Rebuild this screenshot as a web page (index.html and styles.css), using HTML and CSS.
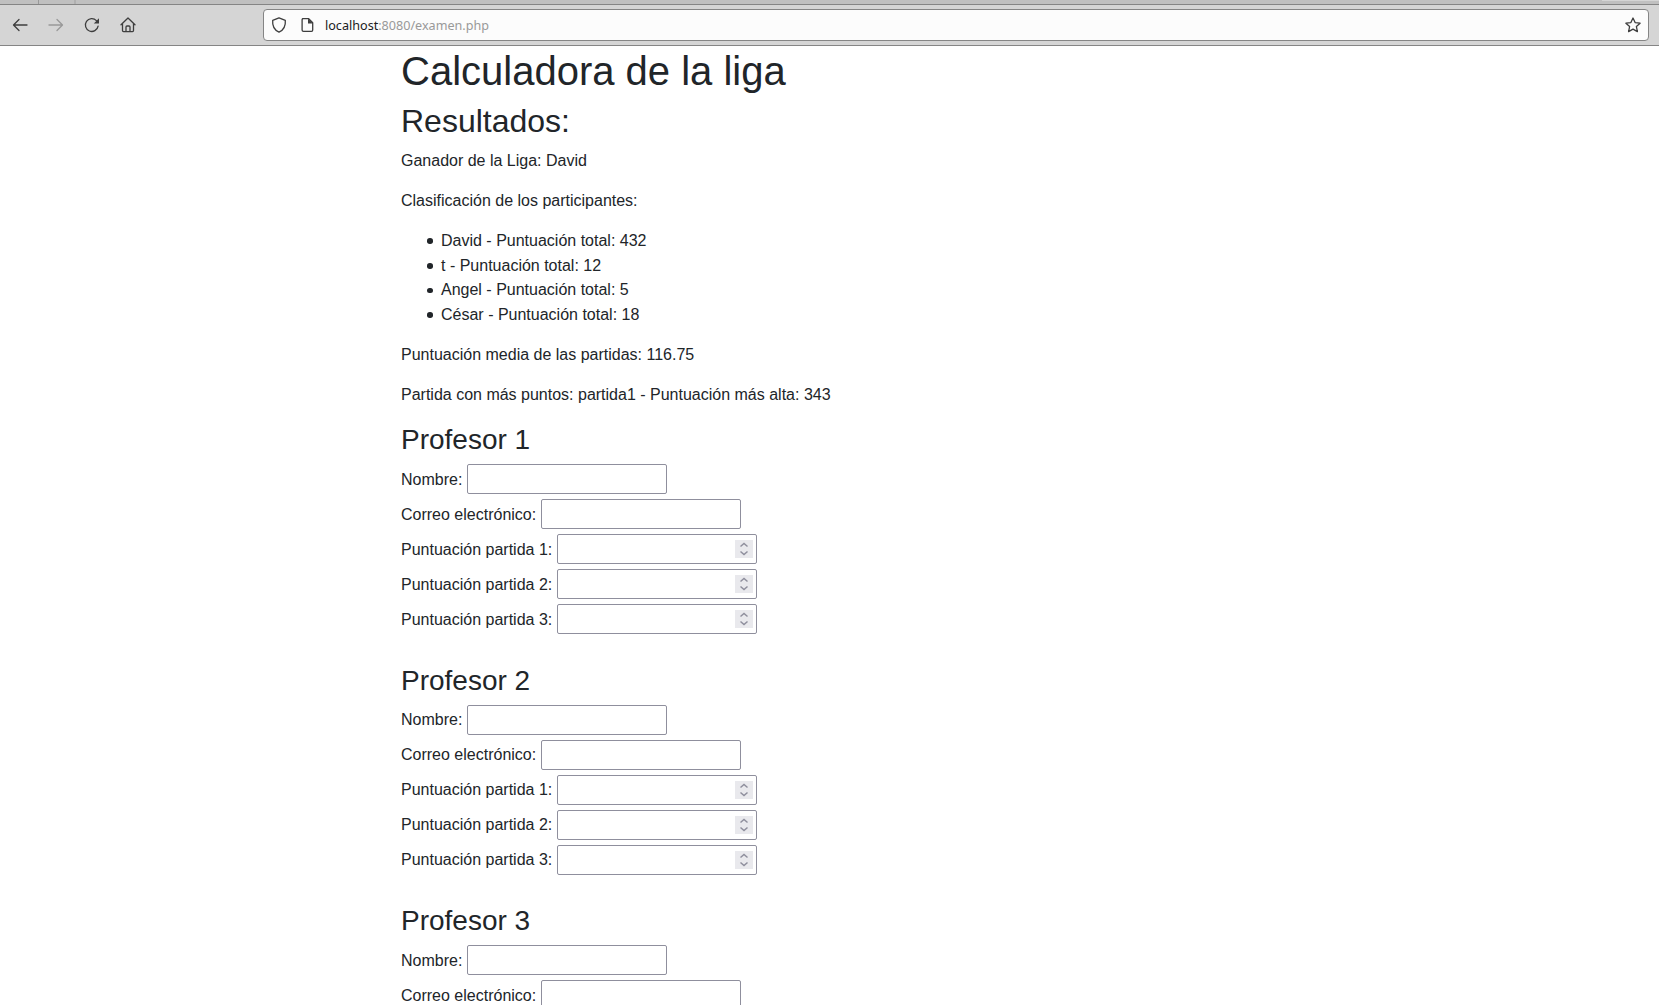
FILE: index.html
```html
<!DOCTYPE html>
<html lang="es">
<head>
<meta charset="utf-8">
<title>Calculadora de la liga</title>
<link rel="stylesheet" href="styles.css">
</head>
<body>
<header class="chrome">
  <div class="tabs"><span class="tab tab-first"></span><span class="tab tab-second"></span><span class="tab-end"></span></div>
  <nav class="toolbar">
    <svg class="icon" viewBox="0 0 16 16"><path d="M15 8H1.6M7 2.5L1.5 8L7 13.5"/></svg>
    <svg class="icon disabled" viewBox="0 0 16 16"><path d="M1 8h13.4M9 2.5L14.5 8L9 13.5"/></svg>
    <svg class="icon" viewBox="0 0 16 16"><path d="M14.1 9.2A6.4 6.4 0 1 1 12.4 3.6"/><path class="solid" d="M15 1.2v5.2H9.8z"/></svg>
    <svg class="icon home" viewBox="0 0 16 16"><path d="M1 7.8L8 1l7 6.8M2.5 6.8v6.8q0 1 1 1h9q1 0 1-1V6.8M6 14.5V10q0-1 1-1h2q1 0 1 1v4.5"/></svg>
    <div class="urlbar">
      <svg class="icon" viewBox="0 0 16 16"><path d="M8 .8L14.3 3.3C14.8 8.6 12.6 13.1 8 15.2C3.4 13.1 1.2 8.6 1.7 3.3Z"/></svg>
      <svg class="icon page" viewBox="0 0 16 16"><path d="M3.5 1.7h6.2l4 4v7.4q0 1.2-1.2 1.2h-8q-1.4 0-1.4-1.2V2.9q0-1.2 1.2-1.2z"/><path class="solid" d="M9 1.5v5h5z"/></svg>
      <span class="address"><span class="host">localhost</span>:8080/examen.php</span>
      <svg class="icon star" viewBox="0 0 16 16"><path d="M8 1l2.1 4.6 5 .6-3.7 3.4 1 5L8 12.1l-4.4 2.5 1-5L.9 6.2l5-.6z"/></svg>
    </div>
  </nav>
</header>
<main class="container">
  <h1>Calculadora de la liga</h1>
  <h2>Resultados:</h2>
  <p>Ganador de la Liga: David</p>
  <p>Clasificación de los participantes:</p>
  <ul>
    <li>David - Puntuación total: 432</li>
    <li>t - Puntuación total: 12</li>
    <li>Angel - Puntuación total: 5</li>
    <li>César - Puntuación total: 18</li>
  </ul>
  <p>Puntuación media de las partidas: 116.75</p>
  <p>Partida con más puntos: partida1 - Puntuación más alta: 343</p>
  <form>
    <section class="teacher">
      <h3>Profesor 1</h3>
      <label class="row"><span class="caption">Nombre:</span><span class="field"><input type="text"></span></label>
      <label class="row"><span class="caption">Correo electrónico:</span><span class="field"><input type="email"></span></label>
      <label class="row"><span class="caption">Puntuación partida 1:</span><span class="field"><input type="number"><svg class="spin" viewBox="0 0 18 18"><path d="M5.5 6.5L9 3.5l3.5 3M5.5 11.5L9 14.5l3.5-3"/></svg></span></label>
      <label class="row"><span class="caption">Puntuación partida 2:</span><span class="field"><input type="number"><svg class="spin" viewBox="0 0 18 18"><path d="M5.5 6.5L9 3.5l3.5 3M5.5 11.5L9 14.5l3.5-3"/></svg></span></label>
      <label class="row"><span class="caption">Puntuación partida 3:</span><span class="field"><input type="number"><svg class="spin" viewBox="0 0 18 18"><path d="M5.5 6.5L9 3.5l3.5 3M5.5 11.5L9 14.5l3.5-3"/></svg></span></label>
    </section>
    <section class="teacher">
      <h3>Profesor 2</h3>
      <label class="row"><span class="caption">Nombre:</span><span class="field"><input type="text"></span></label>
      <label class="row"><span class="caption">Correo electrónico:</span><span class="field"><input type="email"></span></label>
      <label class="row"><span class="caption">Puntuación partida 1:</span><span class="field"><input type="number"><svg class="spin" viewBox="0 0 18 18"><path d="M5.5 6.5L9 3.5l3.5 3M5.5 11.5L9 14.5l3.5-3"/></svg></span></label>
      <label class="row"><span class="caption">Puntuación partida 2:</span><span class="field"><input type="number"><svg class="spin" viewBox="0 0 18 18"><path d="M5.5 6.5L9 3.5l3.5 3M5.5 11.5L9 14.5l3.5-3"/></svg></span></label>
      <label class="row"><span class="caption">Puntuación partida 3:</span><span class="field"><input type="number"><svg class="spin" viewBox="0 0 18 18"><path d="M5.5 6.5L9 3.5l3.5 3M5.5 11.5L9 14.5l3.5-3"/></svg></span></label>
    </section>
    <section class="teacher">
      <h3>Profesor 3</h3>
      <label class="row"><span class="caption">Nombre:</span><span class="field"><input type="text"></span></label>
      <label class="row"><span class="caption">Correo electrónico:</span><span class="field"><input type="email"></span></label>
    </section>
  </form>
</main>
</body>
</html>
```
FILE: styles.css
```css
* { box-sizing: border-box; }
body {
  margin: 0;
  height: 100vh;
  overflow: hidden;
  background: #fff;
  color: #212529;
  font: 16px/24px "Liberation Sans", Arial, sans-serif;
}
.chrome { height: 46px; border-bottom: 1px solid #858585; background: #d5d5d5; }
.tabs { display: flex; height: 5px; background: #c0c0c0; border-bottom: 1px solid #858585; }
.tab-first { width: 39px; border-right: 1px solid #999; }
.tab-second { width: 37px; border-right: 2px solid #b0b0b0; }
.tab-end { margin-left: auto; width: 57px; height: 1px; background: #d5d5d5; }
.toolbar { display: flex; align-items: center; height: 40px; padding: 0 10px 0 12px; }
.icon { flex: none; width: 16px; height: 16px; margin-right: 20px; fill: none; stroke: #3e3e3e; stroke-width: 1.3; stroke-linejoin: round; stroke-linecap: round; }
.icon .solid { fill: #3e3e3e; stroke: none; }
.disabled { stroke: #999; }
.home { margin: 0 20.5px 0 -0.5px; }
.urlbar {
  display: flex;
  align-items: center;
  flex: 1;
  height: 32px;
  margin-left: 107px;
  padding: 0 7px;
  border: 1px solid #858585;
  border-radius: 4px;
  background: #fcfcfc;
}
.urlbar .icon { margin-right: 12px; }
.urlbar .page { margin-right: 10px; }
.urlbar .star { margin: 0 0 0 auto; }
.address { padding-top: 2px; color: #999; font: 12.6px/20px "Noto Sans", sans-serif; }
.host { color: #202020; }
.container { padding: 0.6px 0 0 401px; }
h1, h2, h3 { margin: 0; font-weight: 400; line-height: 1.2; }
h1 { margin-bottom: 7.4px; font-size: 40px; }
h2 { margin-bottom: 8.6px; font-size: 32px; }
h3 { margin-bottom: 7.4px; font-size: 28px; }
p { margin: 0 0 16px; }
ul { margin: 0 0 16px; padding-left: 40px; height: 98px; list-style: none; }
li { height: 24.65px; }
li::before {
  content: "";
  display: inline-block;
  width: 5.6px;
  height: 5.6px;
  margin: 0 8px 0 -13.6px;
  border-radius: 50%;
  background: currentColor;
  vertical-align: 2px;
}
.teacher { padding-bottom: 24.6px; }
.row { display: flex; gap: 4.5px; height: 35px; line-height: 30px; }
.caption { padding-top: 0.6px; }
.field { display: flex; align-items: center; width: 200px; height: 30px; padding-right: 3px; border: 1px solid #8f8f9d; border-radius: 2px; background: #fff; }
input { flex: 1; min-width: 0; height: 24px; padding: 0 2px; border: 0; outline: 0; background: none; font: inherit; appearance: textfield; }
input::-webkit-inner-spin-button { appearance: none; margin: 0; }
.spin { flex: none; width: 18px; height: 18px; background: #e9e9ed; fill: none; stroke: #8f8f9d; stroke-width: 1.5; }
```
